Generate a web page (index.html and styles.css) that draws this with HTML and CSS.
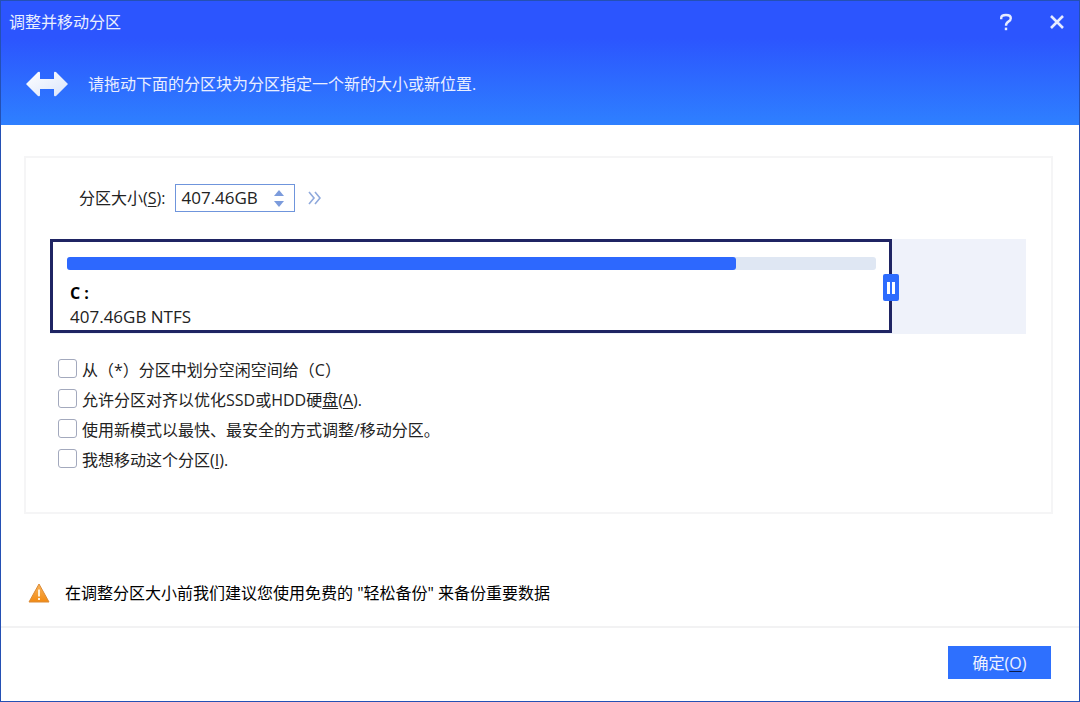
FILE: index.html
```
<!DOCTYPE html>
<html lang="zh-CN">
<head>
<meta charset="UTF-8">
<meta name="viewport" content="width=device-width, initial-scale=1.0">
<title>调整并移动分区</title>
<link rel="stylesheet" href="styles.css">
</head>
<body>
<div class="dialog">
  <header class="header">
    <div class="title-bar">
      <h1>调整并移动分区</h1>
      <div class="window-buttons">
        <button type="button" class="icon-btn" aria-label="帮助">
          <svg width="14" height="20" viewBox="0 0 14 20" fill="none" stroke="#e6ebff" stroke-width="2.4">
            <path d="M2.2 7.2V6Q2.2 3 7 3T11.8 6.2Q11.8 8.2 9.4 9.6Q7 11 7 13.8"/>
            <path d="M7 15.6V18.2"/>
          </svg>
        </button>
        <button type="button" class="icon-btn" aria-label="关闭">
          <svg width="16" height="16" viewBox="0 0 16 16" fill="none" stroke="#e6ebff" stroke-width="2.6">
            <path d="M2 2L14 14M14 2L2 14"/>
          </svg>
        </button>
      </div>
    </div>
    <div class="banner">
      <svg width="42" height="26" viewBox="0 0 42 26">
        <defs>
          <linearGradient id="arrow-fill" x1="0" y1="0" x2="1" y2="1">
            <stop offset="0" stop-color="#ffffff"/>
            <stop offset="1" stop-color="#d9e4fb"/>
          </linearGradient>
        </defs>
        <path fill="url(#arrow-fill)" d="M0 13L12 1Q14 0 14 2V8H28V2Q28 0 30 1L42 13L30 25Q28 26 28 24V18H14V24Q14 26 12 25Z"/>
      </svg>
      <p>请拖动下面的分区块为分区指定一个新的大小或新位置.</p>
    </div>
  </header>

  <main class="content">
    <section class="panel">
      <div class="size-row">
        <label for="size">分区大小(<u>S</u>):</label>
        <div class="spinner">
          <input type="text" id="size" value="407.46GB">
          <div class="spinner-buttons">
            <button type="button" aria-label="增加"><svg width="10" height="6" viewBox="0 0 10 6"><path fill="#7b9bdc" d="M5 0L10 6H0Z"/></svg></button>
            <button type="button" aria-label="减少"><svg width="10" height="6" viewBox="0 0 10 6"><path fill="#7b9bdc" d="M0 0H10L5 6Z"/></svg></button>
          </div>
        </div>
        <button type="button" class="more-btn" aria-label="更多">
          <svg width="13" height="14" viewBox="0 0 13 14" fill="none" stroke="#8fa9dc" stroke-width="1.6">
            <path d="M1 1L6 7L1 13M7 1L12 7L7 13"/>
          </svg>
        </button>
      </div>

      <div class="disk">
        <div class="partition">
          <div class="usage"><div class="usage-fill"></div></div>
          <strong>C :</strong>
          <span>407.46GB NTFS</span>
          <button type="button" class="handle" aria-label="调整大小"></button>
        </div>
      </div>

      <div class="options">
        <label for="opt-space"><input type="checkbox" id="opt-space"><span>从（*）分区中划分空闲空间给（C）</span></label>
        <label for="opt-align"><input type="checkbox" id="opt-align"><span>允许分区对齐以优化SSD或HDD硬<u>盘</u>(<u>A</u>).</span></label>
        <label for="opt-mode"><input type="checkbox" id="opt-mode"><span>使用新模式以最快、最安全的方式调整/移动分区。</span></label>
        <label for="opt-move"><input type="checkbox" id="opt-move"><span>我想移动这个分区(<u>I</u>).</span></label>
      </div>
    </section>

    <div class="notice">
      <svg width="22" height="20" viewBox="0 0 22 20">
        <defs>
          <linearGradient id="warn-fill" x1="0" y1="0" x2="0" y2="1">
            <stop offset="0" stop-color="#f8b45c"/>
            <stop offset="1" stop-color="#f28a12"/>
          </linearGradient>
        </defs>
        <path fill="url(#warn-fill)" stroke="#dc8a35" stroke-linejoin="round" d="M11 1L21 19H1Z"/>
        <path stroke="#fff0d8" stroke-width="2" d="M11 6.5V13.5M11 15V17"/>
      </svg>
      <p>在调整分区大小前我们建议您使用免费的 "轻松备份" 来备份重要数据</p>
    </div>
  </main>

  <footer class="footer">
    <button type="button" class="ok-btn">确定(<u>O</u>)</button>
  </footer>
</div>
</body>
</html>
```
FILE: styles.css
```
* {
  box-sizing: border-box;
}
body {
  margin: 0;
  font-family: "Open Sans", "Noto Sans CJK SC", sans-serif;
  font-size: 16px;
  line-height: 24px;
  color: #222;
}
h1,
p {
  margin: 0;
}
button,
input {
  font: inherit;
  color: inherit;
}
button {
  padding: 0;
  border: none;
  background: none;
  cursor: pointer;
}
svg {
  display: block;
}
u {
  text-underline-offset: 2px;
}
.dialog {
  display: flex;
  flex-direction: column;
  min-height: 100vh;
  border: 1px solid #2450b4;
  background-color: #fff;
}
.header {
  padding-bottom: 28px;
  background: linear-gradient(#2c55fe 30%, #2e80ff);
  color: #e9eeff;
}
.title-bar {
  display: flex;
  justify-content: space-between;
  align-items: center;
  height: 42px;
  padding: 0 14px 0 8px;
}
.title-bar h1 {
  font-size: 16px;
  font-weight: normal;
}
.window-buttons {
  display: flex;
  align-items: center;
  gap: 36px;
}
.banner {
  display: flex;
  align-items: center;
  gap: 20px;
  height: 54px;
  padding: 28px 25px 0;
}
.content {
  flex: 1;
  padding: 31px 26px 20px 23px;
}
.panel {
  padding: 26px 25px 40px 24px;
  border: 2px solid #f5f5f6;
}
.size-row {
  display: flex;
  align-items: center;
  padding-left: 29px;
}
.spinner {
  display: flex;
  align-items: center;
  width: 120px;
  height: 28px;
  margin: 0 13px 0 10px;
  padding: 0 10px 0 5px;
  border: 1px solid #6f95dc;
}
.spinner input {
  flex: 1;
  min-width: 0;
  padding: 0;
  border: none;
  outline: none;
  background: none;
  font-size: 17px;
}
.spinner-buttons {
  display: flex;
  flex-direction: column;
  gap: 5px;
}
.disk {
  height: 95px;
  margin-top: 27px;
  background-color: #eff2fa;
}
.partition {
  position: relative;
  display: flex;
  flex-direction: column;
  width: 86.3%;
  height: 94px;
  padding: 15px 13px 0 14px;
  border: 3px solid #1f2463;
  background-color: #fff;
}
.partition strong {
  margin-top: 12px;
  padding-left: 3px;
  line-height: 23px;
  color: #000;
}
.partition span {
  padding-left: 3px;
  font-size: 17px;
  line-height: 23px;
}
.usage {
  height: 13px;
  border-radius: 3px;
  background-color: #dfe7f3;
}
.usage-fill {
  width: 82.7%;
  height: 100%;
  border-radius: 3px;
  background-color: #2d68fe;
}
.handle {
  position: absolute;
  top: 32px;
  right: -10px;
  display: flex;
  justify-content: center;
  align-items: center;
  gap: 2px;
  width: 16px;
  height: 27px;
  border-radius: 2px;
  background-color: #2d6cfe;
}
.handle::before,
.handle::after {
  content: "";
  width: 3px;
  height: 12px;
  background-color: #fff;
}
.options {
  display: flex;
  flex-direction: column;
  align-items: flex-start;
  gap: 6px;
  margin-top: 24px;
  padding-left: 8px;
}
.options label {
  display: flex;
  gap: 5px;
}
.options input {
  appearance: none;
  width: 19px;
  height: 19px;
  margin: 1px 0 0;
  border: 1px solid #a3a9bd;
  border-radius: 3px;
  background-color: #fff;
}
.options input:checked {
  background-color: #2d6cfe;
}
.notice {
  display: flex;
  align-items: center;
  gap: 15px;
  margin-top: 67px;
  padding-left: 4px;
  color: #000;
}
.footer {
  display: flex;
  justify-content: flex-end;
  padding: 18px 28px 22px;
  border-top: 2px solid #f2f2f3;
}
.ok-btn {
  width: 103px;
  height: 33px;
  background-color: #2e70fe;
  color: #eef2ff;
}
.ok-btn u {
  text-decoration-color: #0b1c4d;
}
```
